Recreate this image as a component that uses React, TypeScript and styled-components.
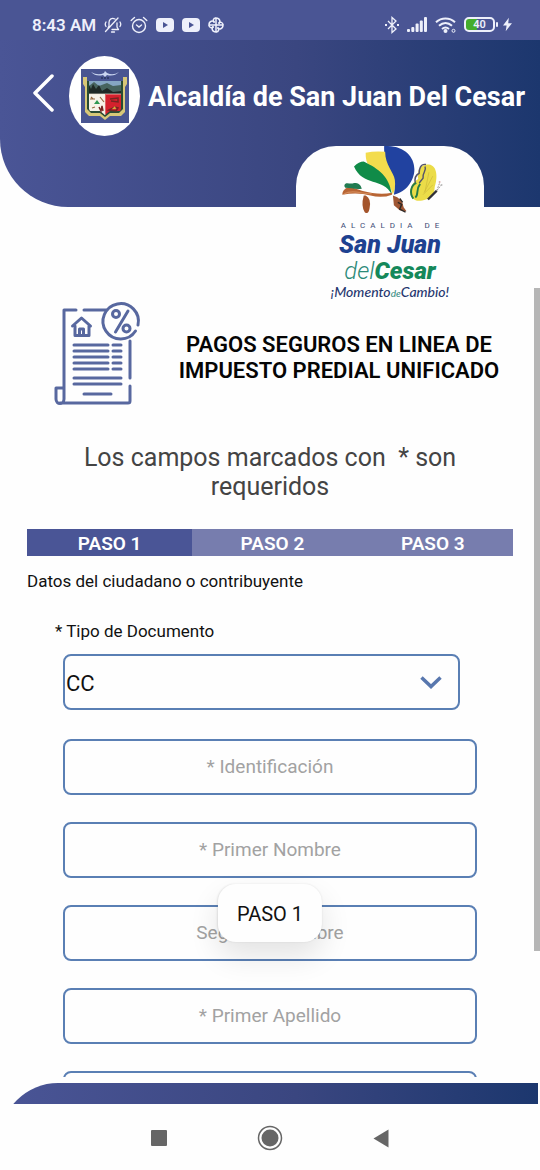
import React from "react";
import styled, { createGlobalStyle, css } from "styled-components";

const GlobalStyle = createGlobalStyle`
  * { box-sizing: border-box; }
  body { margin: 0; background: #fefefe; font-family: Roboto, "Noto Sans", sans-serif; }
  button, input, select { font-family: inherit; }
  h1, h2, p { margin: 0; }
`;

const brandGradient = "linear-gradient(90deg, #4a5596 0%, #3a4680 55%, #1c376e 100%)";

const Screen = styled.div`
  position: relative;
  display: flex;
  flex-direction: column;
  height: 100vh;
  overflow: hidden;
  background: #fefefe;
`;

const StatusBar = styled.div`
  display: flex;
  flex: none;
  align-items: center;
  justify-content: space-between;
  height: 40px;
  padding: 9px 28px 0 32px;
  background: #4a5594;
  color: #eef0fb;
`;

const StatusGroup = styled.div<{ $gap: number }>`
  display: flex;
  align-items: center;
  gap: ${(p) => p.$gap}px;
`;

const Clock = styled.time`
  font-size: 17px;
  line-height: 20px;
  font-weight: 600;
`;

const Header = styled.header`
  flex: none;
  height: 167px;
  padding-top: 16px;
  border-bottom-left-radius: 68px;
  background: ${brandGradient};
`;

const HeaderRow = styled.div`
  display: flex;
  align-items: center;
  height: 80px;
  padding-left: 26px;
`;

const BackButton = styled.button`
  display: flex;
  flex: none;
  align-items: center;
  justify-content: center;
  width: 34px;
  height: 48px;
  margin: 0 9px 8px 0;
  padding: 0;
  border: 0;
  background: none;
`;

const Crest = styled.div`
  display: flex;
  flex: none;
  align-items: center;
  justify-content: center;
  width: 71px;
  height: 80px;
  margin-right: 8px;
  border-radius: 50%;
  background: #fff;
`;

const Title = styled.h1`
  padding-top: 2px;
  color: #fff;
  font-size: 27px;
  line-height: 36px;
  font-weight: 700;
  white-space: nowrap;
`;

const Brand = styled.div`
  display: flex;
  flex: none;
  flex-direction: column;
  align-self: flex-end;
  align-items: center;
  width: 188px;
  height: 155px;
  margin: -61px 56px -13px 0;
  border-radius: 40px 40px 0 0;
  background: #fefefe;
  color: #1d4190;
`;

const BrandCaption = styled.span`
  padding: 4px 0 0 5px;
  font: 8px/10px Roboto, sans-serif;
  letter-spacing: 5px;
  color: #3b4a75;
  white-space: nowrap;
`;

const BrandName = styled.span`
  font: italic 900 25px/28px Roboto, sans-serif;
  white-space: nowrap;
`;

const BrandPlace = styled(BrandName)`
  color: #15885a;
  font-size: 24px;
  line-height: 25px;
  em { color: #2c8a78; font-weight: 300; }
`;

const BrandMotto = styled.span`
  color: #26376f;
  font: italic 500 14px/15px Lato, sans-serif;
  white-space: nowrap;
  em { color: #3b8f86; font-size: 10px; }
`;

const Content = styled.main`
  position: relative;
  flex: 1;
  min-height: 0;
  overflow: hidden;
  padding: 13px 27px 0;
`;

const ScrollThumb = styled.div`
  position: absolute;
  top: 0;
  right: 0;
  width: 6px;
  height: 84%;
  background: #b6b6b6;
`;

const Intro = styled.div`
  display: flex;
  align-items: center;
  gap: 24px;
  height: 108px;
  padding-left: 26px;
  svg { flex: none; overflow: visible; }
`;

const IntroTitle = styled.h2`
  flex: 1;
  margin-top: 6px;
  color: #050505;
  font-size: 22px;
  line-height: 26px;
  font-weight: 600;
  text-align: center;
`;

const Notice = styled.p`
  margin-top: 34px;
  padding: 0 48px;
  color: #444;
  font-size: 25px;
  line-height: 29px;
  text-align: center;
  white-space: pre-wrap;
`;

const Steps = styled.nav`
  display: grid;
  grid-template-columns: 34fr 33fr 33fr;
  margin-top: 28px;
`;

const Step = styled.button<{ $active?: boolean }>`
  height: 27px;
  padding: 2px 0 0;
  border: 0;
  background: ${(p) => (p.$active ? "#4a5596" : "#777dae")};
  color: #fff;
  font-size: 19px;
  line-height: 25px;
  font-weight: 600;
`;

const SectionText = styled.p`
  margin-top: 15px;
  color: #111;
  font-size: 17px;
  line-height: 20px;
`;

const Form = styled.form`
  display: flex;
  flex-direction: column;
  padding: 30px 36px 0;
`;

const Label = styled.label`
  margin: 0 0 13px -8px;
  color: #111;
  font-size: 17px;
  line-height: 20px;
`;

const fieldFrame = css`
  width: 100%;
  height: 56px;
  border: 2px solid #5a7fb4;
  border-radius: 8px;
  background: #fefefe;
  outline: none;
`;

const SelectBox = styled.div`
  display: grid;
  align-items: center;
  margin: 0 17px 29px 0;
  > * { grid-area: 1 / 1; }
  svg { justify-self: end; margin-right: 18px; pointer-events: none; }
`;

const Select = styled.select`
  ${fieldFrame}
  padding: 2px 0 0 1px;
  appearance: none;
  color: #111;
  font-size: 22px;
`;

const Field = styled.input`
  ${fieldFrame}
  flex: none;
  margin-bottom: 27px;
  padding: 0 12px 3px;
  color: #111;
  font-size: 20px;
  text-align: center;
  &::placeholder { color: #a2a2a2; font-size: 19px; opacity: 1; }
`;

const Toast = styled.div`
  position: absolute;
  bottom: 228px;
  left: 50%;
  transform: translateX(-50%);
  padding: 18px 19px 16px;
  border-radius: 18px;
  background: #fefefe;
  box-shadow: 0 14px 30px rgba(0, 0, 0, 0.11), 0 0 2px rgba(0, 0, 0, 0.1);
  color: #111;
  font-size: 20px;
  line-height: 24px;
  white-space: nowrap;
`;

const FooterClip = styled.footer`
  flex: none;
  height: 21px;
  margin: 6px 2px 0 0;
  overflow: hidden;
`;

const FooterShape = styled.div`
  height: 60px;
  border-top-left-radius: 58px;
  background: ${brandGradient};
`;

const SystemNav = styled.nav`
  display: flex;
  flex: none;
  justify-content: center;
  gap: 71px;
  height: 66px;
  padding-top: 14px;
`;

const NavButton = styled.button`
  display: flex;
  align-items: center;
  justify-content: center;
  width: 40px;
  height: 40px;
  margin: 0;
  padding: 0;
  border: 0;
  background: none;
`;

const BellOffIcon = () => (
  <svg width="18" height="18" viewBox="0 0 18 18" fill="none" stroke="currentColor" strokeWidth="1.3" strokeLinecap="round" strokeLinejoin="round">
    <path d="M8 13.500h6.500L13 11V7M11 3C8 1.500 5 3 5 6.500V10l-1 2M7.500 16h3M1.500 15.500 14 2M2 6c-1 1.500-1 3 0 4.500M16 6c1 1.500 1 3 0 4.500" />
  </svg>
);

const AlarmIcon = () => (
  <svg width="18" height="18" viewBox="0 0 18 18" fill="none" stroke="currentColor" strokeWidth="1.4" strokeLinecap="round">
    <circle cx="9" cy="10" r="6.500" />
    <path d="M1.200 4.500 4.500 1.500M13.500 1.500l3.300 3M6.500 9 9 11l2.500-2" />
  </svg>
);

const VideoIcon = () => (
  <svg width="18" height="14" viewBox="0 0 18 14">
    <rect width="18" height="14" rx="4" fill="currentColor" />
    <path d="M7 4v6l5-3z" fill="#4a5594" />
  </svg>
);

const PinwheelIcon = () => (
  <svg width="16" height="16" viewBox="0 0 16 16" fill="none" stroke="currentColor" strokeWidth="1.500" strokeLinejoin="round">
    <path d="M8 8V1C12 1 13 5 10.500 6.500" />
    <path d="M8 8h7c0 4-4 5-5.500 2.500" />
    <path d="M8 8v7c-4 0-5-4-2.500-5.500" />
    <path d="M8 8H1c0-4 4-5 5.500-2.500" />
    <path d="M8 1C5 1 4.500 4 6.500 5.500M15 8c0-3-3-3.500-4.500-1.500M8 15c3 0 3.500-3 1.500-4.500M1 8c0 3 3 3.500 4.500 1.500" />
  </svg>
);

const BluetoothIcon = () => (
  <svg width="14" height="18" viewBox="0 0 14 18" fill="none" stroke="currentColor" strokeWidth="1.300">
    <path d="m3 5 8 8-4 3.500v-15L11 5l-8 8" />
    <path d="M0 9h2M12 9h2" strokeWidth="2" />
  </svg>
);

const SignalIcon = () => (
  <svg width="20" height="15" viewBox="0 0 20 15" fill="currentColor">
    <rect y="12" width="3" height="3" rx="1" />
    <rect x="4.300" y="10" width="3" height="5" rx="1" />
    <rect x="8.600" y="6.500" width="3" height="8.500" rx="1" />
    <rect x="12.800" y="3.500" width="3" height="11.500" rx="1" />
    <rect x="17" width="3" height="15" rx="1" />
  </svg>
);

const WifiIcon = () => (
  <svg width="21" height="16" viewBox="0 0 21 16" fill="none" stroke="currentColor" strokeWidth="2">
    <path d="M1 5.200c5.500-5 13.500-5 19 0M4 8.700c4-3.500 9-3.500 13 0M7 12c2.300-2 4.700-2 7 0" />
    <circle cx="10.500" cy="14" r="1" />
    <circle cx="18.500" cy="13.800" r="1.500" strokeWidth="1" />
  </svg>
);

const Battery = styled.span`
  display: flex;
  align-items: center;
  gap: 1px;
  &::after { content: ""; width: 2px; height: 5px; border-radius: 1px; background: currentColor; }
`;

const BatteryBody = styled.span`
  width: 31px;
  height: 15px;
  border: 2px solid currentColor;
  border-radius: 5px;
  background: linear-gradient(90deg, #44ac2c 40%, transparent 40%);
  color: #eef0fb;
  font-size: 11px;
  line-height: 12px;
  font-weight: 600;
  text-align: center;
`;

const BoltIcon = () => (
  <svg width="9" height="15" viewBox="0 0 10 15" fill="currentColor">
    <path d="M6.500 0 0 8.500h4L3 15l7-9H5.800z" />
  </svg>
);

const CrestArt = () => (
  <svg width="48" height="54" viewBox="0 0 48 54">
    <rect width="48" height="54" fill="#495591" />
    <path d="M2 8h5l2 2h30l2-2h5v7l-2 3v25l-4 4H29l-5 4-5-4H8l-4-4V18l-2-3z" fill="#d7c778" />
    <path d="M6 9h2v3h32V9h2v31l-4 4H29l-5 4-5-4H10l-4-4z" fill="#284b34" />
    <path d="M6 7h36v5H6z" fill="#495591" />
    <path d="M8 12h32v14H8z" fill="#86a6c3" />
    <path d="M8 17l5-4 5 4 8-3 6 3 8-1v10H8z" fill="#47645f" />
    <path d="M8 16l2 4 2-5 3 5 3-4 3 6 5-3 6 4 8-1v4H8z" fill="#1f2926" />
    <path d="M8 25h16v21l-5-4H9l-1-2z" fill="#f7f3e9" />
    <path d="M24 25h16v15l-1 2H29l-5 4z" fill="#d5212d" />
    <path d="M8 25h32M24 26v20" stroke="#efe8d7" strokeWidth=".700" />
    <path d="m16 31-3 4h6z" fill="#2e9850" />
    <path d="m19 28 4 5M10 28l2 2M11 39l3-1M9 30h5" stroke="#93683f" strokeWidth="1.200" />
    <path d="m18 38 2 4 1-5 1 5M29 30l8-1v4l-7-1M28 41l6-3 3 1-2 3z" fill="none" stroke="#742622" strokeWidth="1.500" />
    <path d="m31 40 3-3 1 3" fill="#dba83e" />
    <path d="M10 3q7 4 13 1l1-2 2 2q6 3 12-1-5 5-12 3l-2 2-2-2q-7 2-12-3z" fill="#c9d5f0" />
    <path d="M20 9h9" stroke="#27355e" strokeWidth="1.500" strokeDasharray="2 1" />
  </svg>
);

const BrandArt = () => (
  <svg width="108" height="73" viewBox="-2 0 108 73">
    <path d="M46 0c25-1 36 17 29 34-4 9-10 14-19 16 4-19-11-22-10-50z" fill="#2142a0" />
    <path d="M27 7q9-2 20-1c0 14 9 21 10 29q1 8-2 15C51 30 26 31 27 7z" fill="#f3dc4d" />
    <path d="M25 16C41 24 51 31 54 50 45 32 24 42 15 21q5-5 10-5z" fill="#108b48" />
    <path d="M54 50q-10 4-22 1-13-4-29-1c0-5 5-9 11-7l9 3c12 3 21 4 31 2z" fill="#b86534" />
    <path d="M5 41c1-5 6-1 10-3 5 0 7 2 8 6-7 1-11-1-17-1z" fill="#217b51" />
    <path d="M5 49c9-5 19 1 28 0" stroke="#d38a59" strokeWidth="1.200" fill="none" />
    <path d="M27 51q6 3 4 13-1 7-5 4-4-6-1-17z" fill="#a4552c" />
    <path d="M55 51q10 3 11 12l3 4-7-1-6-5z" fill="#9f5734" />
    <path d="m60 58 4 2-2 5 6 3M62 54l3 4" stroke="#302925" strokeWidth="1.500" fill="none" />
    <path d="M92 19c9 1 9 14 6 23q0 12-9 13c-11 4-17-1-16-10 1-5 4-9 8-11-2-9 3-16 11-15z" fill="#ebdc48" />
    <path d="M89 19c-6-1-7 5-7 9-4 2-5 5-4 10M88 21c2 5-3 6-2 12l-4 5" fill="none" stroke="#55546b" strokeWidth="1.500" />
    <path d="M79 38c-6 3-7 11-3 16M83 39c-5 6-1 11-5 14" fill="none" stroke="#267b46" strokeWidth="2" />
    <path d="m92 27-4 20M96 31l-9 17M96 40l-10 10" stroke="#d0bd3d" strokeWidth=".800" />
    <path d="m91 55 9-9" stroke="#303036" strokeWidth="2.500" />
    <path d="m100 46 3-8M100 46l5-6" stroke="#77706f" strokeWidth=".700" strokeDasharray="2 1" />
    <circle cx="103" cy="37" r="1" fill="#dbaaa8" />
    <circle cx="105" cy="40" r="1" fill="#bbb" />
  </svg>
);

const TaxBillIcon = () => (
  <svg width="88" height="106" viewBox="0 0 88 106" fill="none" stroke="#58689f" strokeWidth="3" strokeLinecap="round" strokeLinejoin="round">
    <path d="M11 87V8h12M31 8h22M77 39v37M77 84v15q0 2-2 2H7M11 86H3v11c0 6 8 6 8 0z" />
    <path d="M85 23A17.700 17.700 0 1 0 82.500 29" />
    <circle cx="63" cy="12" r="3.500" />
    <circle cx="73.500" cy="26.500" r="3.500" />
    <path d="M75 9 62.500 30" />
    <path d="m19.500 24 9-8 9 8M22 24v9.500h14V24M26.500 33v-6h4v6" />
    <path d="M21 43h34M21 49h34M21 55h34M21 61h34M21 67h34M60 43h8M60 49h8M60 55h8M60 61h8M60 67h8M21 76h47M21 82h47M31 92h27" />
  </svg>
);

const fields = ["* Identificación", "* Primer Nombre", "Segundo Nombre", "* Primer Apellido", "Segundo Apellido"];

export default function App() {
  return (
    <>
      <GlobalStyle />
      <Screen>
        <StatusBar>
          <StatusGroup $gap={8}>
            <Clock>8:43 AM</Clock>
            <BellOffIcon />
            <AlarmIcon />
            <VideoIcon />
            <VideoIcon />
            <PinwheelIcon />
          </StatusGroup>
          <StatusGroup $gap={8}>
            <BluetoothIcon />
            <SignalIcon />
            <WifiIcon />
            <StatusGroup $gap={5}>
              <Battery><BatteryBody>40</BatteryBody></Battery>
              <BoltIcon />
            </StatusGroup>
          </StatusGroup>
        </StatusBar>
        <Header>
          <HeaderRow>
            <BackButton type="button" aria-label="Volver">
              <svg width="24" height="40" viewBox="0 0 24 40" fill="none" stroke="#fff" strokeWidth="3.500" strokeLinecap="round" strokeLinejoin="round">
                <path d="M21 4 4 21l17 17" />
              </svg>
            </BackButton>
            <Crest><CrestArt /></Crest>
            <Title>Alcaldía de San Juan Del Cesar</Title>
          </HeaderRow>
        </Header>
        <Brand>
          <BrandArt />
          <BrandCaption>ALCALDIA DE</BrandCaption>
          <BrandName>San Juan</BrandName>
          <BrandPlace><em>del</em>Cesar</BrandPlace>
          <BrandMotto>¡Momento<em>de</em>Cambio!</BrandMotto>
        </Brand>
        <Content>
          <Intro>
            <TaxBillIcon />
            <IntroTitle>PAGOS SEGUROS EN LINEA DE IMPUESTO PREDIAL UNIFICADO</IntroTitle>
          </Intro>
          <Notice>{"Los campos marcados con  * son requeridos"}</Notice>
          <Steps>
            <Step type="button" $active>PASO 1</Step>
            <Step type="button">PASO 2</Step>
            <Step type="button">PASO 3</Step>
          </Steps>
          <SectionText>Datos del ciudadano o contribuyente</SectionText>
          <Form>
            <Label htmlFor="document-type">* Tipo de Documento</Label>
            <SelectBox>
              <Select id="document-type" defaultValue="CC">
                <option>CC</option>
              </Select>
              <svg width="22" height="14" viewBox="0 0 22 14" fill="none" stroke="#5877ae" strokeWidth="3.500">
                <path d="m1.500 2.500 9.500 9 9.500-9" />
              </svg>
            </SelectBox>
            {fields.map((name) => (
              <Field key={name} type="text" placeholder={name} aria-label={name} />
            ))}
          </Form>
          <ScrollThumb />
        </Content>
        <FooterClip><FooterShape /></FooterClip>
        <SystemNav>
          <NavButton type="button" aria-label="Recientes">
            <svg width="16" height="16"><rect width="16" height="16" rx="1" fill="#666" /></svg>
          </NavButton>
          <NavButton type="button" aria-label="Inicio">
            <svg width="26" height="26"><circle cx="13" cy="13" r="11.500" fill="none" stroke="#666" strokeWidth="1.500" /><circle cx="13" cy="13" r="8.500" fill="#666" /></svg>
          </NavButton>
          <NavButton type="button" aria-label="Atrás">
            <svg width="16" height="19"><path d="M15.500.500v18L.500 9.500z" fill="#666" /></svg>
          </NavButton>
        </SystemNav>
        <Toast role="status">PASO 1</Toast>
      </Screen>
    </>
  );
}
